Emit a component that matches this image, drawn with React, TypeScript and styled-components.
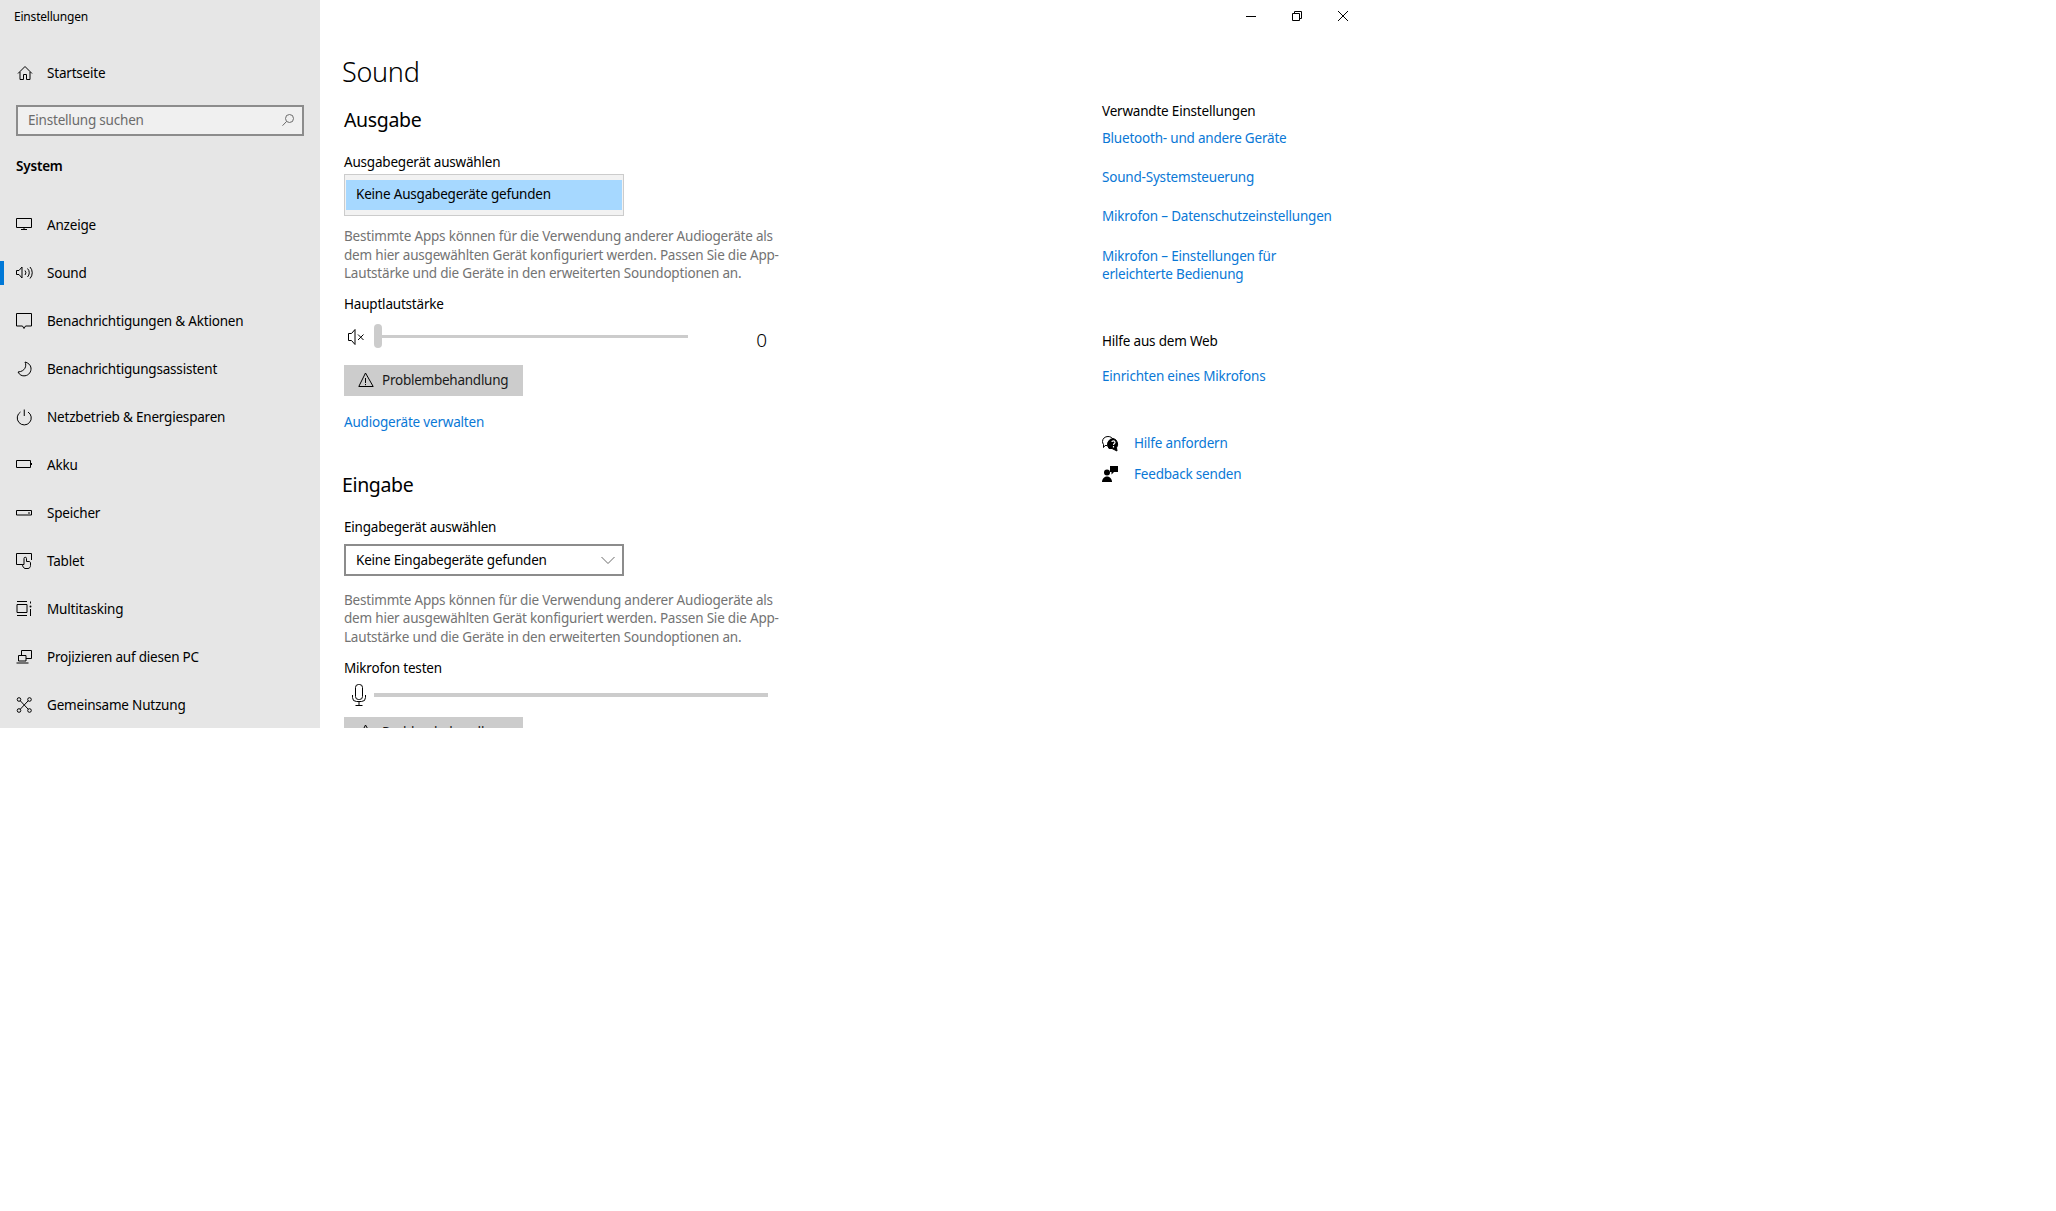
import styled, { createGlobalStyle } from "styled-components";
import type { ReactNode } from "react";

const GlobalStyle = createGlobalStyle`
  html, body {
    margin: 0;
    background: #fff;
  }
  body {
    font-family: "Noto Sans", "Open Sans", sans-serif;
    font-size: 13.5px;
    letter-spacing: -0.2px;
    color: #000;
  }
`;

const Window = styled.div`
  display: flex;
  width: 1366px;
  height: 728px;
  overflow: hidden;
  background: #fff;
`;

const Sidebar = styled.aside`
  width: 320px;
  flex-shrink: 0;
  background: #e6e6e6;
`;

const AppTitle = styled.div`
  height: 34px;
  line-height: 34px;
  padding-left: 14px;
  font-size: 12px;
`;

const NavRow = styled.div<{ $active?: boolean }>`
  position: relative;
  display: flex;
  align-items: center;
  height: 48px;
  padding-left: 16px;
  line-height: 21px;
  svg {
    flex-shrink: 0;
    margin-right: 15px;
  }
  &::before {
    content: "";
    display: ${(p) => (p.$active ? "block" : "none")};
    position: absolute;
    left: 0;
    top: 12px;
    width: 4px;
    height: 24px;
    background: #0078d7;
  }
`;

const HomeRow = styled(NavRow)`
  margin-top: 15px;
`;

const SearchBox = styled.div`
  display: flex;
  align-items: center;
  justify-content: space-between;
  box-sizing: border-box;
  width: 288px;
  height: 31px;
  margin: 8px 0 0 16px;
  padding: 0 8px 2px 10px;
  border: 2px solid #8c8c8c;
  background: #f0f0f0;
  color: #6b6b6b;
`;

const GroupTitle = styled.div`
  margin: 20px 0 25px 16px;
  line-height: 20px;
  font-weight: 600;
`;

const Main = styled.main`
  flex: 1;
  min-width: 0;
`;

const WindowBar = styled.div`
  display: flex;
  justify-content: flex-end;
  gap: 36px;
  height: 32px;
  padding: 11px 18px 0 0;
  box-sizing: border-box;
`;

const Columns = styled.div`
  display: flex;
  padding-left: 22px;
`;

const Content = styled.section`
  width: 760px;
  flex-shrink: 0;
`;

const PageTitle = styled.h1`
  margin: 20px 0 0;
  font-size: 27px;
  font-weight: 300;
  line-height: 40px;
  letter-spacing: -0.3px;
`;

const SectionTitle = styled.h2<{ $top: number }>`
  margin: ${(p) => p.$top}px 0 0;
  font-size: 19.5px;
  font-weight: 400;
  line-height: 28px;
  letter-spacing: -0.35px;
`;

const Block = styled.div`
  padding-left: 2px;
`;

const Label = styled.div<{ $top: number }>`
  margin-top: ${(p) => p.$top}px;
  line-height: 20px;
`;

const OpenList = styled.div`
  box-sizing: border-box;
  width: 280px;
  height: 42px;
  margin-top: 2px;
  padding: 5px 1px;
  border: 1px solid #ccc;
  background: #f2f2f2;
`;

const ListItem = styled.div`
  height: 30px;
  line-height: 29px;
  padding-left: 10px;
  background: #a6d8ff;
`;

const Select = styled.div`
  display: flex;
  align-items: center;
  justify-content: space-between;
  box-sizing: border-box;
  width: 280px;
  height: 32px;
  margin-top: 7px;
  padding: 0 7px 0 10px;
  border: 2px solid #8c8c8c;
`;

const Description = styled.p<{ $top: number }>`
  margin: ${(p) => p.$top}px 0 0;
  line-height: 18.5px;
  color: #737373;
  white-space: nowrap;
`;

const SliderRow = styled.div`
  display: flex;
  align-items: center;
  width: 424px;
  height: 24px;
  margin-top: 11px;
`;

const SliderIcon = styled.div<{ $inset: number }>`
  display: flex;
  width: 30px;
  padding-left: ${(p) => p.$inset}px;
  box-sizing: border-box;
  flex-shrink: 0;
`;

const Track = styled.div<{ $thick?: boolean }>`
  position: relative;
  width: ${(p) => (p.$thick ? 394 : 314)}px;
  height: ${(p) => (p.$thick ? 4 : 3)}px;
  background: #ccc;
`;

const Thumb = styled.div`
  position: absolute;
  left: 0;
  top: -11px;
  width: 8px;
  height: 24px;
  border-radius: 4px;
  background: #ccc;
`;

const VolumeValue = styled.div`
  margin: 6px 0 0 auto;
  padding-right: 1px;
  font-size: 19px;
  font-weight: 300;
  line-height: 28px;
`;

const MicRow = styled(SliderRow)`
  height: 26px;
  margin-top: 4px;
`;

const Button = styled.div<{ $top: number }>`
  display: flex;
  align-items: center;
  box-sizing: border-box;
  width: 179px;
  height: 31px;
  margin-top: ${(p) => p.$top}px;
  padding-left: 14px;
  background: #ccc;
  color: #1a1a1a;
  letter-spacing: -0.25px;
  svg {
    margin-right: 8px;
  }
`;

const TextLink = styled.a<{ $top: number }>`
  display: block;
  margin-top: ${(p) => p.$top}px;
  line-height: 18px;
  color: #0a78d6;
`;

const Related = styled.aside`
  width: 240px;
  flex-shrink: 0;
`;

const SupportRow = styled.div<{ $top: number }>`
  display: flex;
  align-items: center;
  margin-top: ${(p) => p.$top}px;
  line-height: 18px;
  color: #0a78d6;
  svg {
    flex-shrink: 0;
    margin-right: 14px;
  }
`;

const Icon = ({ children, w = 16, h = 16 }: { children: ReactNode; w?: number; h?: number }) => (
  <svg width={w} height={h} viewBox={`0 0 ${w} ${h}`} fill="none" stroke="#000" strokeWidth="1" overflow="visible">
    {children}
  </svg>
);

const HomeIcon = () => (
  <Icon>
    <path d="M2 8.5 9 1.5l7 7M4 7v7.5h3.5v-5h3v5H14V7" />
  </Icon>
);
const DisplayIcon = () => (
  <Icon>
    <path d="M.5 1.5h15v9H.5zM8 10.5v2M5 12.5h6" />
  </Icon>
);
const SoundIcon = () => (
  <Icon>
    <path d="M.5 5.5h2.5l3-3.5v11l-3-3.500H.5zM9 5.500a3.500 3.500 0 0 1 0 4.500M11.500 3.500a6 6 0 0 1 0 8.500M14 2a8.500 8.500 0 0 1 0 11.500" />
  </Icon>
);
const NotifyIcon = () => (
  <Icon>
    <path d="M.5.5h15v12.500H9.500L8 15.500 6.500 13H.5z" />
  </Icon>
);
const MoonIcon = () => (
  <Icon>
    <path d="M9 1c2 4 0 9.500-7 10 1.500 3 4 4.200 7 3.800 4-.6 6.300-4 6-7.800C14.700 4 12.500 2 9 1z" />
  </Icon>
);
const PowerIcon = () => (
  <Icon>
    <path d="M4.500 3a7 7 0 1 0 7.500 0M8.250 .5v6.500" />
  </Icon>
);
const BatteryIcon = () => (
  <Icon>
    <path d="M.5 3.500h14v7H.5zM15.500 6v2" />
  </Icon>
);
const StorageIcon = () => (
  <Icon>
    <path d="M.5 5.500h15v4.500H.5zM12 8h2" />
  </Icon>
);
const TabletIcon = () => (
  <Icon>
    <path d="M6.500 11.500H.5V.5h15v6.500" />
    <path d="M9 15.500c-1.500-.5-2.500-2-2.500-4l1.500 0V5.500a1.250 1.250 0 0 1 2.500 0v3h2.500c1 0 1.500.7 1.500 1.500v2.500c0 1.500-1 3-2.500 3z" />
  </Icon>
);
const MultitaskIcon = () => (
  <Icon>
    <path d="M1 .5h10M1 14.500h10M1 3.500h10v8H1zM14.500 .5v2M14.500 8v7" />
    <circle cx="14.500" cy="5.500" r="1" fill="#000" stroke="none" />
  </Icon>
);
const ProjectIcon = () => (
  <Icon>
    <path d="M5.500 6V1.500h10v8H10M2.500 6.500h7.500v5.500H2.500zM.5 14h12" />
  </Icon>
);
const ShareIcon = () => (
  <Icon>
    <circle cx="3" cy="2.500" r="1.800" />
    <circle cx="13.500" cy="2.500" r="1.800" />
    <circle cx="3" cy="13.500" r="1.800" />
    <circle cx="13.500" cy="13.500" r="1.800" />
    <path d="M4.300 3.800l7.900 8.400M12.200 3.800l-7.900 8.400" />
  </Icon>
);

const navItems = [
  { label: "Anzeige", icon: <DisplayIcon /> },
  { label: "Sound", icon: <SoundIcon />, active: true },
  { label: "Benachrichtigungen & Aktionen", icon: <NotifyIcon /> },
  { label: "Benachrichtigungsassistent", icon: <MoonIcon /> },
  { label: "Netzbetrieb & Energiesparen", icon: <PowerIcon /> },
  { label: "Akku", icon: <BatteryIcon /> },
  { label: "Speicher", icon: <StorageIcon /> },
  { label: "Tablet", icon: <TabletIcon /> },
  { label: "Multitasking", icon: <MultitaskIcon /> },
  { label: "Projizieren auf diesen PC", icon: <ProjectIcon /> },
  { label: "Gemeinsame Nutzung", icon: <ShareIcon /> },
];

const WarningIcon = () => (
  <Icon>
    <path d="M7.500 1 .8 14.500h14.400zM7.500 6v5" />
    <path d="M7.500 12v1.200" />
  </Icon>
);

const hint = (
  <>
    Bestimmte Apps können für die Verwendung anderer Audiogeräte als
    <br />
    dem hier ausgewählten Gerät konfiguriert werden. Passen Sie die App-
    <br />
    Lautstärke und die Geräte in den erweiterten Soundoptionen an.
  </>
);

export default function App() {
  return (
    <>
      <GlobalStyle />
      <Window>
        <Sidebar>
          <AppTitle>Einstellungen</AppTitle>
          <HomeRow>
            <HomeIcon />
            Startseite
          </HomeRow>
          <SearchBox>
            Einstellung suchen
            <Icon w={12} h={12}>
              <path d="M11.500 4.500a4 4 0 1 1-8 0 4 4 0 0 1 8 0zM4.500 7.500l-4 4.200" stroke="#6b6b6b" />
            </Icon>
          </SearchBox>
          <GroupTitle>System</GroupTitle>
          {navItems.map((item) => (
            <NavRow key={item.label} $active={item.active}>
              {item.icon}
              {item.label}
            </NavRow>
          ))}
        </Sidebar>
        <Main>
          <WindowBar>
            <Icon w={10} h={10}>
              <path d="M0 5.500h10" />
            </Icon>
            <Icon w={10} h={10}>
              <path d="M.5 2.500h7v7h-7zM2.500 2.500V.5h7v7h-2" />
            </Icon>
            <Icon w={10} h={10}>
              <path d="M0 0l10 10M10 0 0 10" />
            </Icon>
          </WindowBar>
          <Columns>
            <Content>
              <PageTitle>Sound</PageTitle>
              <Block>
                <SectionTitle $top={14}>Ausgabe</SectionTitle>
                <Label $top={18}>Ausgabegerät auswählen</Label>
                <OpenList>
                  <ListItem>Keine Ausgabegeräte gefunden</ListItem>
                </OpenList>
                <Description $top={11}>{hint}</Description>
                <Label $top={11}>Hauptlautstärke</Label>
                <SliderRow>
                  <SliderIcon $inset={4}>
                    <Icon w={18} h={16}>
                      <path d="M.5 4.500h3l3.500-4v15l-3.500-4h-3zM10 5.500l5.500 5.500M15.500 5.500 10 11" />
                    </Icon>
                  </SliderIcon>
                  <Track>
                    <Thumb />
                  </Track>
                  <VolumeValue>0</VolumeValue>
                </SliderRow>
                <Button $top={16}>
                  <WarningIcon />
                  Problembehandlung
                </Button>
                <TextLink $top={17}>Audiogeräte verwalten</TextLink>
              </Block>
              <SectionTitle $top={40}>Eingabe</SectionTitle>
              <Block>
                <Label $top={18}>Eingabegerät auswählen</Label>
                <Select>
                  Keine Eingabegeräte gefunden
                  <Icon w={14} h={8}>
                    <path d="M.5 1l6.500 6.500L13.500 1" stroke="#6b6b6b" />
                  </Icon>
                </Select>
                <Description $top={15}>{hint}</Description>
                <Label $top={11.5}>Mikrofon testen</Label>
                <MicRow>
                  <SliderIcon $inset={7}>
                    <Icon w={16} h={22}>
                      <rect x="4.500" y=".5" width="7" height="15" rx="3" />
                      <path d="M1.500 11v2.500a4 4 0 0 0 4 4h5a4 4 0 0 0 4-4V11M8 17.500v3.500M4.500 21.500h7" />
                    </Icon>
                  </SliderIcon>
                  <Track $thick />
                </MicRow>
                <Button $top={9}>
                  <WarningIcon />
                  Problembehandlung
                </Button>
              </Block>
            </Content>
            <Related>
              <Label $top={69}>Verwandte Einstellungen</Label>
              <TextLink $top={8}>Bluetooth- und andere Geräte</TextLink>
              <TextLink $top={21}>Sound-Systemsteuerung</TextLink>
              <TextLink $top={21}>Mikrofon – Datenschutzeinstellungen</TextLink>
              <TextLink $top={22}>
                Mikrofon – Einstellungen für
                <br />
                erleichterte Bedienung
              </TextLink>
              <Label $top={48}>Hilfe aus dem Web</Label>
              <TextLink $top={16}>Einrichten eines Mikrofons</TextLink>
              <SupportRow $top={49}>
                <Icon w={18} h={16}>
                  <path d="M5 10.500H3L1.500 12.500V9.500C.8 8.500.5 7.500.5 6.500c0-3 2.500-5 5.500-5 2.500 0 4.500 1.300 5.200 3" />
                  <path d="M11.500 3.500a6 6 0 0 0-4.500 10h3l5 2.500-.5-3.200a6 6 0 0 0-3-9.300z" fill="#000" />
                  <path d="M9.800 7c.3-1.500 3-1.500 3.200.2 0 1.300-1.500 1.300-1.500 2.800M11.500 11v1.500" stroke="#fff" strokeWidth="1.200" />
                </Icon>
                Hilfe anfordern
              </SupportRow>
              <SupportRow $top={13}>
                <Icon w={18} h={16}>
                  <circle cx="5" cy="6.500" r="3" fill="#000" stroke="none" />
                  <path d="M0 16c0-3 2-5.500 5-5.500s5 2.500 5 5.500z" fill="#000" stroke="none" />
                  <path d="M8 0h8v6h-4l-2.500 2.500V6H8z" fill="#000" stroke="none" />
                </Icon>
                Feedback senden
              </SupportRow>
            </Related>
          </Columns>
        </Main>
      </Window>
    </>
  );
}
